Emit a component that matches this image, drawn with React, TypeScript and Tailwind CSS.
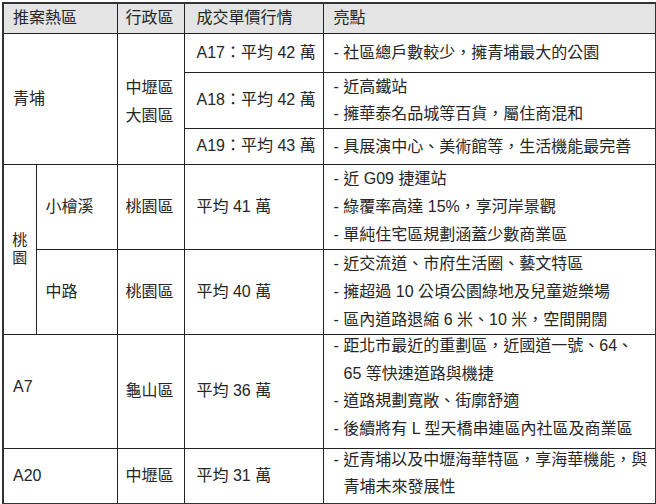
import React from 'react';

type Row = {
  price: string;
  points: string[];
  h: string;
};

const qingpu: Row[] = [
  { price: 'A17：平均 42 萬', points: ['- 社區總戶數較少，擁青埔最大的公園'], h: 'h-[39px]' },
  { price: 'A18：平均 42 萬', points: ['- 近高鐵站', '- 擁華泰名品城等百貨，屬住商混和'], h: 'h-[56px]' },
  { price: 'A19：平均 43 萬', points: ['- 具展演中心、美術館等，生活機能最完善'], h: 'h-[36px]' },
];

const cell = 'border border-[#222] align-middle p-0';

function Points({ items, lh = 'leading-[27px]' }: { items: string[]; lh?: string }) {
  return (
    <div className={lh}>
      {items.map((p, i) => (
        <div key={i} className="whitespace-nowrap">
          {p}
        </div>
      ))}
    </div>
  );
}

export default function App() {
  return (
    <div
      className="w-[656px] h-[504px] bg-white pt-[2px] pl-[2px] text-[16px] text-[#262626]"
      style={{ fontFamily: '"Liberation Sans", "Noto Sans CJK TC", sans-serif' }}
    >
      <table className="table-fixed border-collapse w-[653px] border-2 border-[#333]">
        <colgroup>
          <col className="w-[33px]" />
          <col className="w-[81px]" />
          <col className="w-[67px]" />
          <col className="w-[139px]" />
          <col className="w-[333px]" />
        </colgroup>
        <tbody>
          <tr className="h-[30px] bg-[#e4e4e4]">
            <td colSpan={2} className={`${cell} pl-[9px]`}>推案熱區</td>
            <td className={`${cell} pl-[8px]`}>行政區</td>
            <td className={`${cell} pl-[12px]`}>成交單價行情</td>
            <td className={`${cell} pl-[10px]`}>亮點</td>
          </tr>

          {qingpu.map((r, i) => (
            <tr key={r.price} className={r.h}>
              {i === 0 && (
                <>
                  <td colSpan={2} rowSpan={3} className={`${cell} pl-[9px]`}>青埔</td>
                  <td rowSpan={3} className={`${cell} pl-[8px]`}>
                    <div className="leading-[28px] translate-y-[3px]">
                      <div>中壢區</div>
                      <div>大園區</div>
                    </div>
                  </td>
                </>
              )}
              <td className={`${cell} pl-[12px] whitespace-nowrap`}>{r.price}</td>
              <td className={`${cell} pl-[10px]`}>
                <Points items={r.points} />
              </td>
            </tr>
          ))}

          <tr className="h-[85px]">
            <td rowSpan={2} className={`${cell} text-center text-[15px] leading-[18px]`}>
              桃<br />園
            </td>
            <td className={`${cell} pl-[9px]`}>小檜溪</td>
            <td className={`${cell} pl-[8px]`}>桃園區</td>
            <td className={`${cell} pl-[12px]`}>平均 41 萬</td>
            <td className={`${cell} pl-[10px]`}>
              <Points
                lh="leading-[28px]"
                items={['- 近 G09 捷運站', '- 綠覆率高達 15%，享河岸景觀', '- 單純住宅區規劃涵蓋少數商業區']}
              />
            </td>
          </tr>
          <tr className="h-[85px]">
            <td className={`${cell} pl-[9px]`}>中路</td>
            <td className={`${cell} pl-[8px]`}>桃園區</td>
            <td className={`${cell} pl-[12px]`}>平均 40 萬</td>
            <td className={`${cell} pl-[10px]`}>
              <Points
                lh="leading-[28px]"
                items={['- 近交流道、市府生活圈、藝文特區', '- 擁超過 10 公頃公園綠地及兒童遊樂場', '- 區內道路退縮 6 米、10 米，空間開闊']}
              />
            </td>
          </tr>

          <tr className="h-[114px]">
            <td colSpan={2} className={`${cell} pl-[9px]`}>
              <div className="-translate-y-[4px]">A7</div>
            </td>
            <td className={`${cell} pl-[8px]`}>龜山區</td>
            <td className={`${cell} pl-[12px]`}>平均 36 萬</td>
            <td className={`${cell} pl-[10px]`}>
              <div className="leading-[27.5px] -translate-y-[4px]">
                <div className="whitespace-nowrap">- 距北市最近的重劃區，近國道一號、64、</div>
                <div className="whitespace-nowrap pl-[10px]">65 等快速道路與機捷</div>
                <div className="whitespace-nowrap">- 道路規劃寬敞、街廓舒適</div>
                <div className="whitespace-nowrap">- 後續將有 L 型天橋串連區內社區及商業區</div>
              </div>
            </td>
          </tr>

          <tr className="h-[55px]">
            <td colSpan={2} className={`${cell} pl-[9px]`}>A20</td>
            <td className={`${cell} pl-[8px]`}>中壢區</td>
            <td className={`${cell} pl-[12px]`}>平均 31 萬</td>
            <td className={`${cell} pl-[10px]`}>
              <div className="leading-[27px] -translate-y-[3px]">
                <div className="whitespace-nowrap">- 近青埔以及中壢海華特區，享海華機能，與</div>
                <div className="whitespace-nowrap pl-[10px]">青埔未來發展性</div>
              </div>
            </td>
          </tr>
        </tbody>
      </table>
    </div>
  );
}
